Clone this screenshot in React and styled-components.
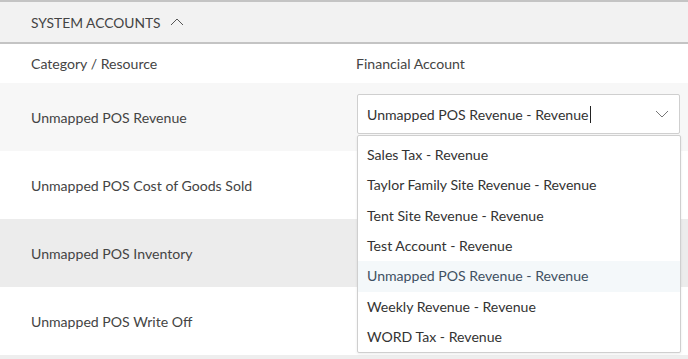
import styled, { createGlobalStyle } from "styled-components";

const Global = createGlobalStyle`
  body {
    margin: 0;
    background: #fff;
    font-family: Lato, "Open Sans", sans-serif;
    color: #444;
  }
`;

const Page = styled.div`
  width: 688px;
  height: 359px;
  overflow: hidden;
  border-top: 2px solid #c4c4c4;
  box-sizing: border-box;
`;

const SectionHeader = styled.div`
  display: flex;
  align-items: center;
  gap: 9px;
  height: 40px;
  padding-left: 31px;
  background: #f2f2f2;
  border-bottom: 2px solid #c4c4c4;
  font-size: 13.8px;
  text-transform: uppercase;
  color: #444;
`;

const Row = styled.div`
  display: grid;
  grid-template-columns: 325px 1fr;
  align-items: center;
  height: ${(p) => p.$h || 68}px;
  padding-left: 31px;
  background: ${(p) => p.$bg || "#fff"};
  font-size: 14.1px;
  color: #444;
`;

const Cell = styled.div`
  position: relative;
  align-self: start;
  margin-top: 11px;
`;

const Select = styled.div`
  display: flex;
  align-items: center;
  justify-content: space-between;
  width: 323px;
  height: 40px;
  box-sizing: border-box;
  margin-left: 1px;
  padding: 0 10px 0 9px;
  background: #fff;
  border: 1px solid #cfcfcf;
  border-radius: 2px;
  color: #333;
`;

const Caret = styled.span`
  display: inline-block;
  width: 1px;
  height: 17px;
  margin-left: 1px;
  vertical-align: -3px;
  background: #222;
`;

const Menu = styled.ul`
  position: absolute;
  left: 1px;
  top: 41px;
  width: 324px;
  margin: 0;
  padding: 4px 0 0;
  list-style: none;
  box-sizing: border-box;
  background: #fff;
  border: 1px solid #cfcfcf;
  border-radius: 2px;
  box-shadow: 0 1px 3px rgba(0, 0, 0, 0.08);
  z-index: 5;
`;

const Item = styled.li`
  height: 30.33px;
  line-height: 30px;
  padding-left: 9px;
  color: ${(p) => (p.$active ? "#3f5062" : "#333")};
  background: ${(p) => (p.$active ? "#f4f8fa" : "transparent")};
`;

const Footer = styled.div`
  height: 4px;
  background: #eee;
`;

const options = [
  "Sales Tax - Revenue",
  "Taylor Family Site Revenue - Revenue",
  "Tent Site Revenue - Revenue",
  "Test Account - Revenue",
  "Unmapped POS Revenue - Revenue",
  "Weekly Revenue - Revenue",
  "WORD Tax - Revenue",
];

const Chevron = ({ up }) => (
  <svg width="14" height="8" viewBox="0 0 14 8" fill="none">
    <polyline
      points={up ? "1,7 7,1 13,7" : "1,1 7,7 13,1"}
      stroke={up ? "#555" : "#777"}
      strokeWidth="1"
    />
  </svg>
);

export default function App() {
  return (
    <>
      <Global />
      <Page>
        <SectionHeader>
          System Accounts <Chevron up />
        </SectionHeader>
        <Row $h={39}>
          <div>Category / Resource</div>
          <div>Financial Account</div>
        </Row>
        <Row $bg="#f7f7f7">
          <div>Unmapped POS Revenue</div>
          <Cell>
            <Select>
              <span>
                Unmapped POS Revenue - Revenue
                <Caret />
              </span>
              <Chevron />
            </Select>
            <Menu>
              {options.map((o) => (
                <Item key={o} $active={o.startsWith("Unmapped")}>
                  {o}
                </Item>
              ))}
            </Menu>
          </Cell>
        </Row>
        <Row>
          <div>Unmapped POS Cost of Goods Sold</div>
          <div />
        </Row>
        <Row $bg="#ececec">
          <div>Unmapped POS Inventory</div>
          <div />
        </Row>
        <Row>
          <div>Unmapped POS Write Off</div>
          <div />
        </Row>
        <Footer />
      </Page>
    </>
  );
}
